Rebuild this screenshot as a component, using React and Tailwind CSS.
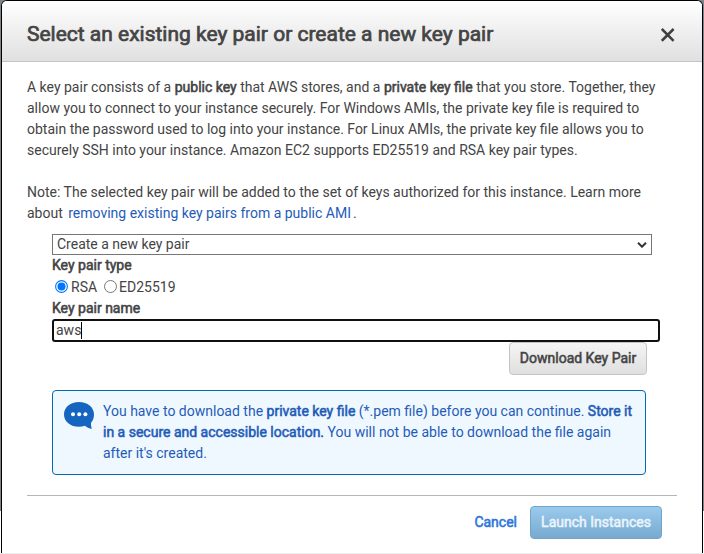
import React from "react";

const Strong = ({ children }) => (
  <b className="font-normal [-webkit-text-stroke:0.55px_currentColor]">{children}</b>
);

const Line = ({ children, className = "" }) => (
  <span className={`block h-[21px] whitespace-nowrap ${className}`}>{children}</span>
);

function Header() {
  return (
    <header className="flex h-[61px] items-center justify-between rounded-t-[5px] border-b border-[#c4c4c4] bg-gradient-to-b from-white to-[#e0e0e0] pr-[27px] pl-[25px]">
      <h1 className="mt-[6px] text-[21px] leading-6 tracking-[-0.01px] whitespace-nowrap [&>b]:[-webkit-text-stroke:0.7px_currentColor]">
        <Strong>Select an existing key pair or create a new key pair</Strong>
      </h1>
      <svg className="mt-[7px] h-[14px] w-[14px]" viewBox="0 0 14 14" fill="none" stroke="#3f3f3f" strokeWidth="2.5">
        <path d="M.8 1 12.600 12.800M12.600 1 .8 12.800" />
      </svg>
    </header>
  );
}

function Radio({ label, checked }) {
  return (
    <label className="flex items-center">
      {checked ? (
        <svg className="mr-[3px] -mt-[2px] h-[13px] w-[13px]" viewBox="0 0 13 13">
          <circle cx="6.5" cy="6.5" r="5.9" fill="white" stroke="#0075ff" strokeWidth="1.1" />
          <circle cx="6.5" cy="6.5" r="4" fill="#0075ff" />
        </svg>
      ) : (
        <svg className="mr-[2px] -mt-[2px] h-[13px] w-[13px]" viewBox="0 0 13 13">
          <circle cx="6.5" cy="6.5" r="6" fill="white" stroke="#767676" strokeWidth="1" />
        </svg>
      )}
      <span>{label}</span>
    </label>
  );
}

export default function App() {
  return (
    <div className="h-[554px] w-[704px] overflow-hidden border-b border-[#eeeeee] bg-[linear-gradient(#7e848c_511px,#ffffff_511px)] pl-px font-[Roboto,sans-serif] text-[14px] leading-[21px] text-[#444444]">
      <div className="flex h-[553px] w-[702px] flex-col rounded-t-[6px] border border-b-0 border-black bg-white">
        <Header />
        <main className="pr-[25px] pl-[25px]">
          <p className="mt-[15px]">
            <Line>A key pair consists of a <Strong>public key</Strong> that AWS stores, and a <Strong>private key file</Strong> that you store. Together, they</Line>
            <Line>allow you to connect to your instance securely. For Windows AMIs, the private key file is required to</Line>
            <Line>obtain the password used to log into your instance. For Linux AMIs, the private key file allows you to</Line>
            <Line>securely SSH into your instance. Amazon EC2 supports ED25519 and RSA key pair types.</Line>
          </p>
          <p className="mt-[21px]">
            <Line>Note: The selected key pair will be added to the set of keys authorized for this instance. Learn more</Line>
            <Line>about <a className="mr-[2px] ml-[2px] text-[#1f5cb8]">removing existing key pairs from a public AMI</a>.</Line>
          </p>
          <div className="ml-[25px]">
            <div className="mt-[10px] flex h-[21px] w-[600px] items-center justify-between border border-[#767676] bg-white pr-[4px] pl-[4px]">
              <span>Create a new key pair</span>
              <svg className="h-[6px] w-[10px]" viewBox="0 0 10 6" fill="none" stroke="#333333" strokeWidth="2">
                <path d="M1 .8 5 4.7 9 .8" />
              </svg>
            </div>
            <div><Strong>Key pair type</Strong></div>
            <div className="flex h-[22px] items-center gap-[7px] pl-[3px]">
              <Radio label="RSA" checked />
              <Radio label="ED25519" />
            </div>
            <div><Strong>Key pair name</Strong></div>
            <div className="flex h-[23px] w-[608px] items-center rounded-[3px] border-2 border-[#101010] bg-white pl-[2px]">
              <span>aws</span>
              <span className="h-[17px] w-px bg-black" />
            </div>
            <div className="flex w-[595px] justify-end">
              <button className="h-[33px] w-[138px] rounded-[4px] border border-[#c4c4c4] bg-gradient-to-b from-[#f5f5f5] to-[#dfdfdf] whitespace-nowrap">
                <Strong>Download Key Pair</Strong>
              </button>
            </div>
            <div className="mt-[15px] flex h-[85px] w-[594px] rounded-[4px] border border-[#0068b5] bg-[#f0f8ff] pt-[10px] pl-[11px] text-[#1f5cb8]">
              <svg className="mt-[1px] mr-[9px] h-[28px] w-[30px] shrink-0" viewBox="0 0 30 28">
                <path d="M15 0C6.500 0 0 5.300 0 12.400 0 19.500 6.500 24.700 15 24.700c2 0 4.100-.3 5.900-1 1.700 1.600 4.300 2.800 7 3-.8-1.700-1-3.800-.9-6 2-2.200 3-5 3-8.300C30 5.300 23.500 0 15 0Z" fill="#1565c0" />
                <g fill="white">
                  <circle cx="9" cy="12.200" r="2" />
                  <circle cx="15.200" cy="12.200" r="2" />
                  <circle cx="21.400" cy="12.200" r="2" />
                </g>
              </svg>
              <p>
                <Line>You have to download the <Strong>private key file</Strong> (*.pem file) before you can continue. <Strong>Store it</Strong></Line>
                <Line><Strong>in a secure and accessible location.</Strong> You will not be able to download the file again</Line>
                <Line>after it's created.</Line>
              </p>
            </div>
          </div>
        </main>
        <footer className="mx-[25px] mt-[20px] flex items-center justify-end border-t border-[#b7b7b7] pt-[10px] pr-[15px]">
          <a className="mr-[13px] text-[#2a76d8]"><Strong>Cancel</Strong></a>
          <button className="h-[33px] w-[132px] rounded-[4px] border border-[#70a5cc] bg-gradient-to-b from-[#9acbed] to-[#78aad0] whitespace-nowrap text-[#e9f4fc]">
            <Strong>Launch Instances</Strong>
          </button>
        </footer>
      </div>
    </div>
  );
}
